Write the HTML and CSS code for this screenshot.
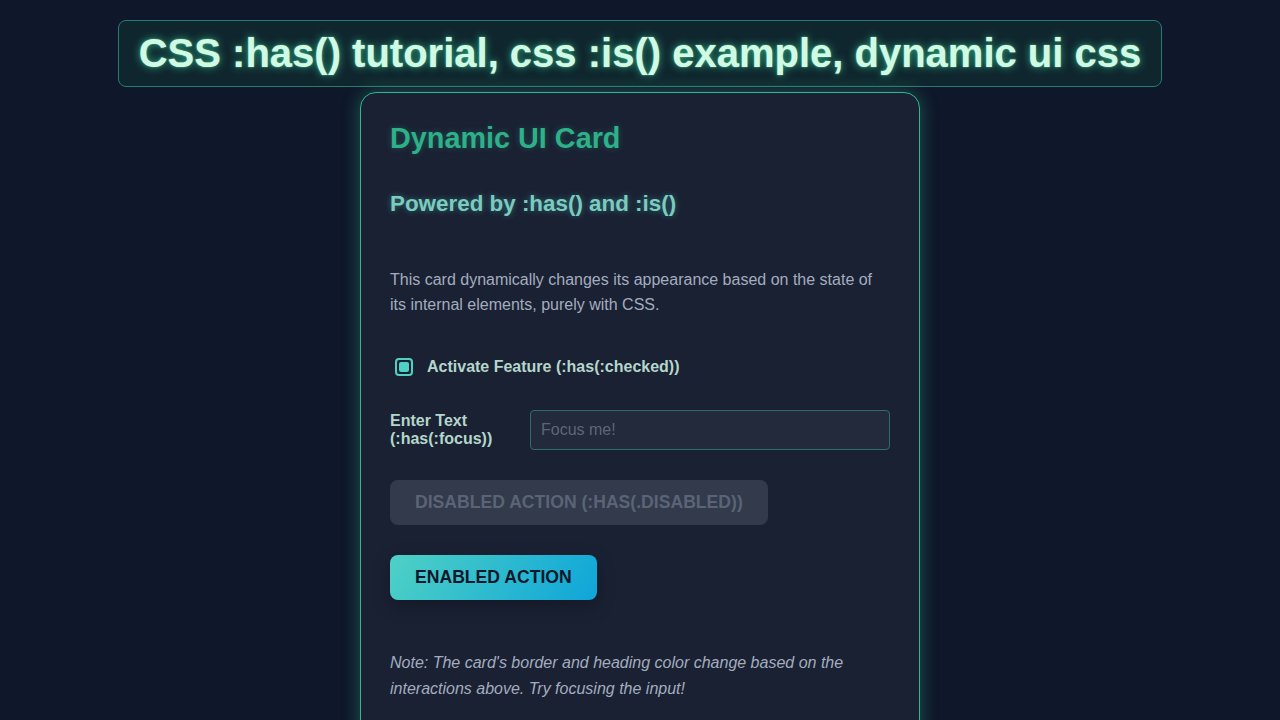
FILE: index.html
```html
<!DOCTYPE html>
<html lang="en">
<head>
<meta charset="utf-8">
<title>CSS :has() tutorial</title>
<link rel="stylesheet" href="styles.css">
</head>
<body>
<header class="page-head">
  <h1 class="page-title">CSS :has() tutorial, css :is() example, dynamic ui css</h1>
</header>
<main class="card">
  <h2 class="card-title">Dynamic UI Card</h2>
  <h3 class="card-sub">Powered by :has() and :is()</h3>
  <p class="card-text">This card dynamically changes its appearance based on the state of its internal elements, purely with CSS.</p>
  <label class="check-row">
    <span class="check-box"><span class="check-dot"></span></span>
    <span class="check-label">Activate Feature (:has(:checked))</span>
  </label>
  <div class="field-row">
    <label class="field-label">Enter Text (:has(:focus))</label>
    <div class="field-input">Focus me!</div>
  </div>
  <div class="btn-row"><button class="btn btn-disabled" type="button">Disabled Action (:has(.disabled))</button></div>
  <div class="btn-row"><button class="btn btn-enabled" type="button">Enabled Action</button></div>
  <p class="card-note">Note: The card's border and heading color change based on the interactions above. Try focusing the input!</p>
</main>
</body>
</html>
```

FILE: styles.css
```css
html, body {
  margin: 0;
  padding: 0;
}
body {
  background: #0f172a;
  font-family: "Liberation Sans", Arial, sans-serif;
  height: 720px;
  overflow: hidden;
  display: flex;
  flex-direction: column;
  align-items: center;
  padding-top: 20px;
  box-sizing: border-box;
}
.page-head {
  border: 1px solid #2a7a70;
  background: #10262e;
  border-radius: 8px;
  padding: 8px 20px 9px;
}
.page-title {
  margin: 0;
  font-size: 40px;
  line-height: 48px;
  font-weight: bold;
  color: #d1fae5;
  text-shadow: 0 0 9px rgba(52, 211, 153, 0.75), 0 0 2px rgba(167, 243, 208, 0.6);
  white-space: nowrap;
}
.card {
  margin-top: 5px;
  width: 560px;
  box-sizing: border-box;
  background: #1a2133;
  border: 1px solid #2fb88b;
  border-radius: 16px;
  padding: 29px 29px 40px;
  box-shadow: 0 0 18px rgba(52, 211, 153, 0.35);
  flex-shrink: 0;
}
.card-title {
  margin: 0;
  font-size: 28.8px;
  line-height: 33px;
  color: #2eb088;
  text-shadow: 0 0 6px rgba(46, 176, 136, 0.35);
}
.card-sub {
  margin: 36px 0 0;
  font-size: 22.4px;
  line-height: 26px;
  color: #7ccbbf;
  text-shadow: 0 0 6px rgba(79, 209, 197, 0.45);
}
.card-text {
  margin: 50px 0 0;
  font-size: 16px;
  line-height: 25px;
  color: #a3adbf;
}
.check-row {
  margin-top: 38px;
  display: flex;
  align-items: center;
  height: 24px;
}
.check-box {
  margin-left: 5px;
  width: 18px;
  height: 18px;
  box-sizing: border-box;
  border: 2px solid #4fd1c5;
  border-radius: 4px;
  display: flex;
  align-items: center;
  justify-content: center;
}
.check-dot {
  width: 10px;
  height: 10px;
  border-radius: 2px;
  background: #4fd1c5;
}
.check-label {
  margin-left: 14px;
  font-size: 16px;
  font-weight: bold;
  color: #b4d6cb;
}
.field-row {
  margin-top: 31px;
  display: flex;
  align-items: center;
  gap: 20px;
}
.field-label {
  width: 120px;
  flex-shrink: 0;
  font-size: 16px;
  line-height: 18px;
  font-weight: bold;
  color: #b4d6cb;
}
.field-input {
  flex: 1;
  height: 40px;
  box-sizing: border-box;
  border: 1px solid #2d6c6c;
  border-radius: 4px;
  background: #232a3b;
  padding: 0 10px;
  display: flex;
  align-items: center;
  font-size: 16px;
  color: #5d6676;
}
.btn-row {
  margin-top: 30px;
  display: flex;
}
.btn {
  font-family: "Liberation Sans", Arial, sans-serif;
  font-size: 17.6px;
  line-height: 21px;
  font-weight: bold;
  text-transform: uppercase;
  border: none;
  border-radius: 8px;
  padding: 12px 25px;
  height: 45px;
}
.btn-disabled {
  background: #323a4c;
  color: #5a6476;
}
.btn-enabled {
  background: linear-gradient(120deg, #4fd1c5 0%, #0ea5d9 100%);
  color: #0f172a;
  box-shadow: 0 6px 18px rgba(0, 0, 0, 0.25);
}
.card-note {
  margin: 50px 0 0;
  font-size: 16px;
  line-height: 26px;
  font-style: italic;
  color: #a3adbf;
}
```
